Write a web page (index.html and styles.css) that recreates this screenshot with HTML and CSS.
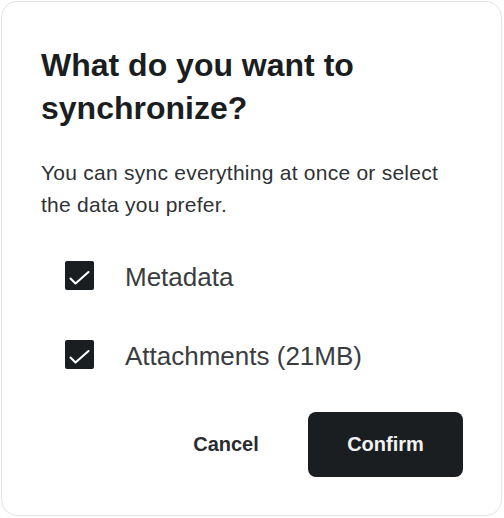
FILE: index.html
```html
<!DOCTYPE html>
<html lang="en">
<head>
<meta charset="utf-8">
<title>Synchronize</title>
<link rel="stylesheet" href="styles.css">
</head>
<body>
<div class="dialog">
  <h1 class="title">What do you want to synchronize?</h1>
  <p class="desc">You can sync everything at once or select the data you prefer.</p>
  <div class="options">
    <label class="option">
      <span class="box"><svg viewBox="0 0 29 29" width="29" height="29"><path d="M5.5 17.5 L10.5 22.5 L23.5 11" fill="none" stroke="#fff" stroke-width="2.1" stroke-linecap="round" stroke-linejoin="round"/></svg></span>
      <span class="label">Metadata</span>
    </label>
    <label class="option">
      <span class="box"><svg viewBox="0 0 29 29" width="29" height="29"><path d="M5.5 17.5 L10.5 22.5 L23.5 11" fill="none" stroke="#fff" stroke-width="2.1" stroke-linecap="round" stroke-linejoin="round"/></svg></span>
      <span class="label">Attachments (21MB)</span>
    </label>
  </div>
  <div class="actions">
    <button class="btn btn-cancel">Cancel</button>
    <button class="btn btn-confirm">Confirm</button>
  </div>
</div>
</body>
</html>
```
FILE: styles.css
```css
* { box-sizing: border-box; }
html, body { margin: 0; padding: 0; background: #fff; }
body { padding: 1px; font-family: "Liberation Sans", Arial, sans-serif; }
.dialog {
  width: 501px;
  height: 515px;
  border: 1.5px solid #e3e3e3;
  border-radius: 16px;
  padding: 42px 38px 38px 39px;
  display: flex;
  flex-direction: column;
  background: #fff;
}
.title {
  margin: 0;
  font-size: 32px;
  line-height: 43px;
  font-weight: 700;
  color: #1b1e21;
  width: 360px;
}
.desc {
  margin: 27px 0 0;
  font-size: 21px;
  letter-spacing: 0.25px;
  line-height: 32px;
  color: #2f3235;
  max-width: 405px;
}
.options {
  margin-top: 40px;
  padding-left: 24px;
  display: flex;
  flex-direction: column;
  gap: 50px;
}
.option {
  display: flex;
  align-items: center;
  gap: 31px;
  height: 29px;
}
.box {
  width: 29px;
  height: 29px;
  border-radius: 2px;
  background: #1b1e21;
  display: flex;
}
.label {
  font-family: "Liberation Sans", Arial, sans-serif;
  font-size: 26px;
  color: #3a3d40;
  padding-top: 4px;
}
.actions {
  margin-top: auto;
  display: flex;
  justify-content: flex-end;
  gap: 6px;
}
.btn {
  font-family: "Liberation Sans", Arial, sans-serif;
  font-size: 20px;
  height: 65px;
  width: 155px;
  border-radius: 8px;
  border: none;
  cursor: pointer;
}
.btn-cancel {
  background: transparent;
  color: #2a2d30;
  font-weight: 700;
  width: 152px;
}
.btn-confirm {
  background: #1b1e21;
  color: #f2f2f2;
  font-weight: 700;
}
```
